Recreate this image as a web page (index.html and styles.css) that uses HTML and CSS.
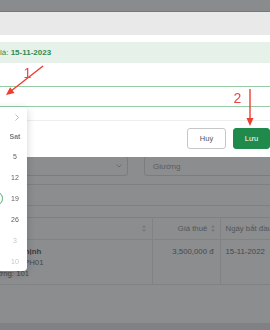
FILE: index.html
```html
<!DOCTYPE html>
<html lang="vi">
<head>
  <meta charset="UTF-8" />
  <meta name="viewport" content="width=device-width, initial-scale=1.0"/>
  <title>Gia hạn hợp đồng</title>
  <link rel="stylesheet" href="styles.css">
</head>
<body>
  <div class="page">
    <div class="page-header"></div>

    <div class="content">
      <div class="filters">
        <div class="field field-select">
          <svg width="6" height="4" viewBox="0 0 6 4"><path d="M0.5 0.5 L3 3 L5.5 0.5" fill="none" stroke="#aaa" stroke-width="0.8"/></svg>
        </div>
        <div class="field field-grow">Giường</div>
      </div>

      <div class="toolbar"></div>

      <table class="grid">
        <colgroup>
          <col class="c-info">
          <col class="c-price">
          <col>
        </colgroup>
        <thead>
          <tr>
            <th class="th-info"><svg class="sort sort-end" width="4" height="7" viewBox="0 0 4 7"><path d="M2 0 L4 2.6 H0Z M2 7 L0 4.4 H4Z"/></svg>Khách thuê</th>
            <th class="th-price">Giá thuê <svg class="sort" width="4" height="7" viewBox="0 0 4 7"><path d="M2 0 L4 2.6 H0Z M2 7 L0 4.4 H4Z"/></svg></th>
            <th>Ngày bắt đầu</th>
          </tr>
        </thead>
        <tbody>
          <tr>
            <td><b>Trần Văn Thịnh</b><br>Mã phòng: PH01<br>Giường: 101</td>
            <td class="td-price">3,500,000 đ</td>
            <td>15-11-2022</td>
          </tr>
        </tbody>
      </table>
    </div>

    <div class="page-footer"></div>
  </div>

  <div class="backdrop"></div>

  <div class="modal">
    <div class="modal-head"></div>
    <div class="modal-body">
      <div class="notice">là:&nbsp;<b>15-11-2023</b></div>
      <input type="text" class="date-input">
    </div>
    <div class="modal-foot">
      <button class="btn btn-cancel">Huỷ</button>
      <button class="btn btn-save">Lưu</button>
    </div>
  </div>

  <div class="datepicker">
    <div class="dp-head">
      <svg width="4" height="7" viewBox="0 0 4 7"><path d="M3.5 0.5 L0.5 3.5 L3.5 6.5" fill="none" stroke="#aaa" stroke-width="0.8"/></svg>
      <span>Tháng 11 2022</span>
      <svg width="4" height="7" viewBox="0 0 4 7"><path d="M0.5 0.5 L3.5 3.5 L0.5 6.5" fill="none" stroke="#aaa" stroke-width="0.8"/></svg>
    </div>
    <div class="dp-week">
      <span>Sun</span><span>Mon</span><span>Tue</span><span>Wed</span><span>Thu</span><span>Fri</span><span>Sat</span>
    </div>
    <div class="dp-days">
      <span class="muted">30</span><span class="muted">31</span><span>1</span><span>2</span><span>3</span><span>4</span><span>5</span>
      <span>6</span><span>7</span><span>8</span><span>9</span><span>10</span><span>11</span><span>12</span>
      <span>13</span><span>14</span><span>15</span><span>16</span><span>17</span><span class="today">18</span><span>19</span>
      <span>20</span><span>21</span><span>22</span><span>23</span><span>24</span><span>25</span><span>26</span>
      <span>27</span><span>28</span><span>29</span><span>30</span><span class="muted">1</span><span class="muted">2</span><span class="muted">3</span>
      <span class="muted">4</span><span class="muted">5</span><span class="muted">6</span><span class="muted">7</span><span class="muted">8</span><span class="muted">9</span><span class="muted">10</span>
    </div>
  </div>

  <svg class="notes" width="270" height="330" viewBox="0 0 270 330">
    <line x1="43" y1="66" x2="11" y2="91" stroke="#ef3d2e" stroke-width="1.4"/>
    <polygon points="6,95 14.5,92.9 10.1,87.3" fill="#ef3d2e"/>
    <text x="23.5" y="77.5" class="note-num">1</text>
    <line x1="250" y1="89" x2="250" y2="119" stroke="#ef3d2e" stroke-width="1.4"/>
    <polygon points="250,126 246.5,118 253.5,118" fill="#ef3d2e"/>
    <text x="233.5" y="102.5" class="note-num">2</text>
  </svg>
</body>
</html>
```

FILE: styles.css
```css
* {
  box-sizing: border-box;
}

html, body {
  margin: 0;
  height: 100%;
}

body {
  font-family: "Liberation Sans", Arial, sans-serif;
  font-size: 7.5px;
  color: #555;
  background: #fff;
  overflow: hidden;
  position: relative;
}

/* trang phía sau modal */
.page {
  display: flex;
  flex-direction: column;
  height: 100vh;
}

.page-header {
  flex: none;
  height: 12px;
  background: #fafafa;
  border-bottom: 1px solid #d4d6d8;
}

.content {
  flex: 1;
  margin: 0 -6px 0 -20px;
  padding-top: 144px;
}

.filters {
  display: flex;
  gap: 16px;
}

.field {
  height: 20px;
  border: 1px solid #dcdcdc;
  border-radius: 3px;
  background: #fff;
  display: flex;
  align-items: center;
  padding: 0 8px;
  font-size: 8px;
  color: #9a9a9a;
}

.field-select {
  width: 148px;
  justify-content: flex-end;
  padding-right: 5px;
}

.field-grow {
  flex: 1;
}

.toolbar {
  margin-top: 8px;
  height: 22px;
  border-top: 1px solid #e4e4e4;
  border-bottom: 1px solid #e4e4e4;
}

.grid {
  margin-top: 11px;
  width: 100%;
  border-collapse: collapse;
  table-layout: fixed;
  border-top: 1px solid #eadfe2;
  font-size: 7.8px;
}

.c-info {
  width: 172px;
}

.c-price {
  width: 68px;
}

.grid th {
  height: 22px;
  padding: 0 5px;
  font-weight: normal;
  color: #8e8e8e;
  text-align: left;
  white-space: nowrap;
  overflow: hidden;
  border-bottom: 1px solid #e8e8e8;
}

.grid th + th,
.grid td + td {
  border-left: 1px solid #e8e8e8;
}

.grid .th-info {
  padding-right: 6px;
}

.grid .th-price {
  text-align: right;
}

.sort {
  fill: #cfcfcf;
  vertical-align: -1px;
  margin-left: 1px;
}

.sort-end {
  float: right;
  margin-top: 1px;
}

.grid td {
  vertical-align: top;
  padding: 6px 5px 5px;
  line-height: 11px;
  color: #727272;
  white-space: nowrap;
  border-bottom: 1px solid #e8e8e8;
}

.grid td b {
  color: #555;
}

.grid .td-price {
  text-align: right;
  padding-right: 6px;
}

.page-footer {
  flex: none;
  height: 7px;
  background: #e6e7e9;
}

.backdrop {
  position: fixed;
  inset: 0;
  background: rgba(33, 37, 41, 0.52);
}

/* modal */
.modal {
  position: absolute;
  top: 12px;
  left: -3px;
  right: -4px;
  background: #fff;
}

.modal-head {
  height: 23px;
  background: #e9e9e9;
}

.modal-body {
  padding: 7px 0 13px;
}

.notice {
  height: 21px;
  display: flex;
  align-items: center;
  padding-left: 3px;
  background: #e6f1ea;
  color: #2f8c52;
  font-size: 8px;
}

.date-input {
  display: block;
  width: 100%;
  height: 21px;
  margin: 23px 0 0;
  border: 1px solid #95cca6;
  border-radius: 3px;
  outline: none;
  background: #fff;
}

.modal-foot {
  display: flex;
  justify-content: flex-end;
  gap: 7px;
  padding: 7px 4px 8px;
  border-top: 1px solid #eeeeee;
}

.btn {
  height: 21px;
  padding: 0;
  border-radius: 3px;
  font-family: inherit;
  font-size: 7.5px;
  cursor: pointer;
}

.btn-cancel {
  width: 39px;
  border: 1px solid #c6c6c6;
  background: #fff;
  color: #555;
}

.btn-save {
  width: 37px;
  border: 1px solid #1f8a4c;
  background: #1f8a4c;
  color: #fff;
}

/* lịch chọn ngày */
.datepicker {
  position: absolute;
  top: 107px;
  left: -119px;
  width: 146px;
  height: 164px;
  padding: 0 2px 0 4px;
  background: #fff;
  border-radius: 4px;
  box-shadow: 0 2px 8px rgba(0, 0, 0, 0.18);
  font-size: 7px;
  color: #5e5e5e;
}

.dp-head {
  height: 20px;
  display: flex;
  align-items: center;
  justify-content: space-between;
  padding: 0 6px;
  font-weight: bold;
}

.dp-week,
.dp-days {
  display: grid;
  grid-template-columns: repeat(7, 20px);
}

.dp-week span {
  height: 19px;
  line-height: 19px;
  text-align: center;
  font-weight: bold;
  color: #7a7a7a;
}

.dp-days span {
  height: 21px;
  line-height: 21px;
  text-align: center;
}

.dp-days .muted {
  color: #c6c6c6;
}

.dp-days .today {
  width: 15px;
  height: 15px;
  margin: 3px auto;
  line-height: 13px;
  border: 1px solid #4caf6e;
  border-radius: 50%;
}

.notes {
  position: absolute;
  top: 0;
  left: 0;
  pointer-events: none;
}

.note-num {
  font-family: "Liberation Sans", Arial, sans-serif;
  font-size: 14px;
  fill: #ee4646;
}
```
